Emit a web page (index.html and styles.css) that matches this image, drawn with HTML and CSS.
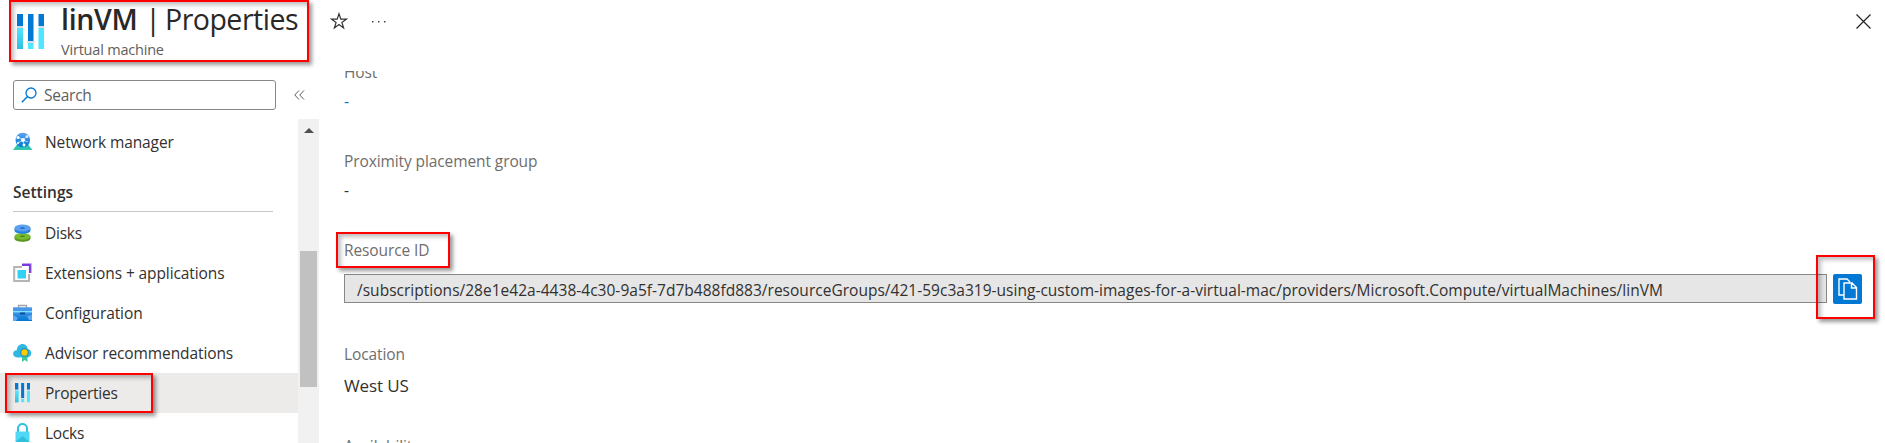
FILE: index.html
```
<!DOCTYPE html>
<html lang="en">
<head>
<meta charset="utf-8">
<title>linVM | Properties</title>
<link rel="stylesheet" href="styles.css">
</head>
<body>
<svg class="defs" width="0" height="0">
  <defs>
    <linearGradient id="cy" x1="0" y1="0" x2="0" y2="1"><stop offset="0" stop-color="#50e6ff"/><stop offset="1" stop-color="#32bedd"/></linearGradient>
    <linearGradient id="bl" x1="0" y1="0" x2="0" y2="1"><stop offset="0" stop-color="#5ea0ef"/><stop offset="1" stop-color="#0078d4"/></linearGradient>
    <symbol id="props" viewBox="0 0 27 35">
      <path fill="#0078d4" d="M0 0h6v12H0zM11 0h5.500v27H11zM21.500 0h5.500v12h-5.500z"/>
      <path fill="#32bedd" d="M0 14h6v21H0z"/>
      <path fill="#50e6ff" d="M21.500 14h5.500v21h-5.500zM11 29h5.500v6H11zM0 14h6v9H0z"/>
      <path fill="#d8dde2" d="M0 12h6v2H0zM21.500 12h5.500v2h-5.500zM10 27h7.500v2H10z"/>
      <path fill="url(#cy)" d="M0 14h6v21H0z"/>
    </symbol>
  </defs>
</svg>
<div class="blade">
  <header class="head">
    <svg class="head-icon" width="27" height="35"><use href="#props"/></svg>
    <div class="titles">
      <h1 class="title"><b class="t-name">linVM</b><span class="t-sep">|</span><span class="t-page">Properties</span></h1>
      <div class="subtitle">Virtual machine</div>
    </div>
    <svg class="star" width="18" height="18" viewBox="0 0 18 18"><path d="M9 1.800l1.800 5.400h5.600l-4.500 3.300 1.700 5.400L9 12.600l-4.600 3.300 1.700-5.400-4.500-3.300h5.600z" fill="none" stroke="#323130" stroke-width="1.200"/></svg>
    <svg class="dots" width="16" height="4" viewBox="0 0 16 4"><path d="M1 1h1.500v1.500H1zM7 1h1.500v1.500H7zM13 1h1.500v1.500H13z" fill="#444"/></svg>
    <svg class="close" width="15" height="15" viewBox="0 0 15 15"><path d="M.5.5l14 14M14.500.5l-14 14" stroke="#222" stroke-width="1.200"/></svg>
  </header>
  <div class="body">
    <nav class="side">
      <div class="search-row">
        <div class="search">
          <svg width="16" height="16" viewBox="0 0 16 16"><circle cx="10" cy="6" r="5" fill="none" stroke="#0078d4" stroke-width="1.300"/><path d="M6.300 9.700L.8 15.200" stroke="#0078d4" stroke-width="1.400"/></svg>
          <span class="tight">Search</span>
        </div>
        <svg class="collapse" width="11" height="10" viewBox="0 0 11 10"><path d="M5 .5L.8 5 5 9.500M10 .5L5.800 5 10 9.500" fill="none" stroke="#605e5c"/></svg>
      </div>
      <div class="menu-wrap">
        <div class="menu">
          <div class="item first">
            <svg width="20" height="20" viewBox="0 0 20 20"><path d="M4 12.500h11l4.500 5.500h-19.500z" fill="#2fc5b0"/><circle cx="9.800" cy="8" r="7.300" fill="url(#bl)"/><path d="M5 5l5 3 4-4M10 8l1 5M5 11l5-3 5 2" stroke="#9cd0fa" fill="none"/><circle cx="10" cy="8" r="2" fill="#fff"/><circle cx="5" cy="5.500" r="1.500" fill="#fff"/><circle cx="14" cy="4.500" r="1.500" fill="#d5ebff"/><circle cx="11" cy="13" r="1.500" fill="#fff"/><circle cx="5" cy="11" r="1.200" fill="#d5ebff"/></svg>
            <span class="snug">Network manager</span>
          </div>
          <div class="group">Settings</div>
          <div class="item">
            <svg width="20" height="20" viewBox="0 0 20 20"><path d="M1.500 13.500v2c0 4.300 16 4.300 16 0v-2z" fill="#5e9624"/><ellipse cx="9.500" cy="13.300" rx="8" ry="3.400" fill="#76bc2d"/><ellipse cx="9.500" cy="13.300" rx="2.500" ry=".8" fill="#4b7c1a"/><path d="M1.500 5v2.500c0 4.300 16 4.300 16 0V5z" fill="#2482dc"/><ellipse cx="9.500" cy="5" rx="8" ry="3.400" fill="#5ea0ef"/><ellipse cx="9.500" cy="5" rx="2.500" ry=".8" fill="#1565b5"/></svg>
            <span class="tight">Disks</span>
          </div>
          <div class="item">
            <svg width="20" height="20" viewBox="0 0 20 20"><path d="M9 4H1.200v14H16v-7" fill="none" stroke="#b4b4b4" stroke-width="2"/><path d="M4.500 7h8.500v8.500H4.500z" fill="#32d0f2"/><path d="M9 2h8v8" fill="none" stroke="#773adc" stroke-width="2.200"/><path d="M9 .5h9.300V10" fill="none" stroke="#c3a2f0" stroke-width="1"/></svg>
            <span class="snug">Extensions + applications</span>
          </div>
          <div class="item">
            <svg width="20" height="20" viewBox="0 0 20 20"><path d="M5.500 5V2.500h8V5" fill="none" stroke="#a3a3a3" stroke-width="1.300"/><path d="M0 4.500h19V18H0z" fill="url(#bl)"/><path d="M0 4.500h19v3H0z" fill="#4a97ea"/><path d="M0 8h19v1.400H0z" fill="#7fe3ff"/><path d="M7 9.500h5v2H7z" fill="#0b4f94"/><path d="M0 12l5 3-2 3H0zM19 12l-5 1 2 4h3z" fill="#62a8ee"/></svg>
            <span class="snug">Configuration</span>
          </div>
          <div class="item">
            <svg width="20" height="20" viewBox="0 0 20 20"><path d="M4.500 14.500C-1.500 14-1 7.500 3.800 7.300 4-.5 14-1 14.700 6c5 .5 4.500 8.300-.3 8.500z" fill="#2fb8e3"/><path d="M9 12h5.500v7l-2.700-2L9 19z" fill="#3cc5a5"/><circle cx="11.500" cy="9.500" r="4.200" fill="#198ab3"/><circle cx="11.500" cy="9.500" r="3.200" fill="#ffca00"/></svg>
            <span class="snug">Advisor recommendations</span>
          </div>
          <div class="item active">
            <svg width="20" height="20"><use href="#props" x="2" y="0" width="15" height="19.400"/></svg>
            <span class="tight">Properties</span>
          </div>
          <div class="item">
            <svg width="20" height="20" viewBox="0 0 20 20"><path d="M5 9V5.500c0-6 9-6 9 0V9" fill="none" stroke="#32bedd" stroke-width="2"/><path d="M2.500 8.500h14V19h-14z" fill="#50d8f5"/><path d="M2.500 19l7-6 7 6z" fill="#32bedd"/></svg>
            <span class="tight">Locks</span>
          </div>
        </div>
        <div class="scroll"><i class="arrow"></i><i class="thumb"></i></div>
      </div>
    </nav>
    <main class="main">
      <div class="label host">Host</div>
      <div class="value link">-</div>
      <div class="label">Proximity placement group</div>
      <div class="value">-</div>
      <div class="label">Resource ID</div>
      <div class="copy-row">
        <div class="field">/subscriptions/28e1e42a-4438-4c30-9a5f-7d7b488fd883/resourceGroups/421-59c3a319-using-custom-images-for-a-virtual-mac/providers/Microsoft.Compute/virtualMachines/linVM</div>
        <div class="copy"><svg width="20" height="22" viewBox="0 0 20 22"><path d="M5.500 17H1V1h8l3 3M6 5h8l4.500 4.500V21H6zM13.500 5v5h5" fill="none" stroke="#fff" stroke-width="1.400"/></svg></div>
      </div>
      <div class="label">Location</div>
      <div class="value west">West US</div>
      <div class="label avail">Availability</div>
    </main>
  </div>
  <i class="mark m-title"></i><i class="mark m-prop"></i><i class="mark m-rid"></i><i class="mark m-copy"></i>
</div>
</body>
</html>
```
FILE: styles.css
```
* { box-sizing: border-box; }
body { margin: 0; background: #fff; color: #323130; font: 15.5px/20px "Open Sans", "Noto Sans", sans-serif; overflow: hidden; }
.defs { position: absolute; }
.blade { position: relative; width: 1885px; height: 443px; overflow: hidden; display: flex; flex-direction: column; }
.head { height: 71px; flex: none; display: flex; align-items: flex-start; padding-left: 17px; padding-right: 14px; }
.head-icon { margin-top: 14px; margin-right: 17px; }
.titles { width: 269px; white-space: nowrap; }
.title { margin: 0; font-size: 28.5px; font-weight: 400; line-height: 39px; display: flex; color: #292827; }
.t-name { font-weight: 600; width: 80px; letter-spacing: -.3px; }
.t-sep { width: 24px; text-align: center; }
.t-page { letter-spacing: -.5px; }
.subtitle { font-size: 14.5px; line-height: 22px; color: #605e5c; letter-spacing: -.2px; }
.star { margin-top: 12px; }
.dots { margin-top: 20px; margin-left: 23px; }
.close { margin-top: 14px; margin-left: auto; }
.body { flex: 1; display: flex; min-height: 0; }
.side { width: 319px; display: flex; flex-direction: column; }
.search-row { height: 48px; flex: none; padding: 9px 0 0 13px; display: flex; }
.search { width: 263px; height: 30px; border: 1px solid #8a8886; border-radius: 3px; display: flex; align-items: center; padding-left: 7px; gap: 7px; color: #605e5c; }
.tight { letter-spacing: -.25px; }
.snug { letter-spacing: -.1px; }
.collapse { margin: 10px 0 0 18px; }
.menu-wrap { flex: 1; display: flex; min-height: 0; }
.menu { width: 298px; overflow: hidden; }
.item { height: 40px; padding-left: 13px; display: flex; align-items: center; gap: 12px; white-space: nowrap; }
.item svg { flex: none; }
.item.active { background: #edebe9; }
.item.first { margin-top: 3px; }
.group { margin: 10px 25px 1px 13px; height: 40px; border-bottom: 1px solid #c8c6c4; font-weight: 600; line-height: 40px; }
.scroll { width: 21px; background: #f1f1f1; display: flex; flex-direction: column; align-items: center; }
.arrow { margin-top: 9px; border: 5px solid transparent; border-top: 0; border-bottom-color: #505050; }
.thumb { margin-top: 118px; width: 17px; height: 136px; background: #c1c1c1; }
.main { flex: 1; min-width: 0; padding-left: 25px; overflow: hidden; white-space: nowrap; }
.label { height: 20px; margin-top: 40px; color: #706e6c; letter-spacing: -.1px; }
.label.host { margin-top: -9px; }
.value { height: 20px; margin-top: 9px; }
.link { color: #0078d4; }
.copy-row { display: flex; gap: 6px; margin-top: 14px; }
.field { width: 1483px; height: 29px; border: 1px solid #8a8886; background: #e6e6e6; line-height: 30px; padding-left: 12px; letter-spacing: .02px; }
.copy { width: 29px; height: 30px; background: #0078d4; border-radius: 2px; display: flex; align-items: center; justify-content: center; }
.west { margin-top: 12px; font-size: 17px; letter-spacing: -.1px; }
.mark { position: absolute; border: 2px solid #f00; box-shadow: 3px 3px 4px rgba(0,0,0,.4), inset 3px 3px 4px rgba(0,0,0,.25); }
.m-title { left: 9px; top: 0; width: 300px; height: 62px; }
.m-prop { left: 5px; top: 373px; width: 148px; height: 40px; }
.m-rid { left: 336px; top: 232px; width: 114px; height: 36px; }
.m-copy { left: 1816px; top: 255px; width: 59px; height: 64px; }
```
